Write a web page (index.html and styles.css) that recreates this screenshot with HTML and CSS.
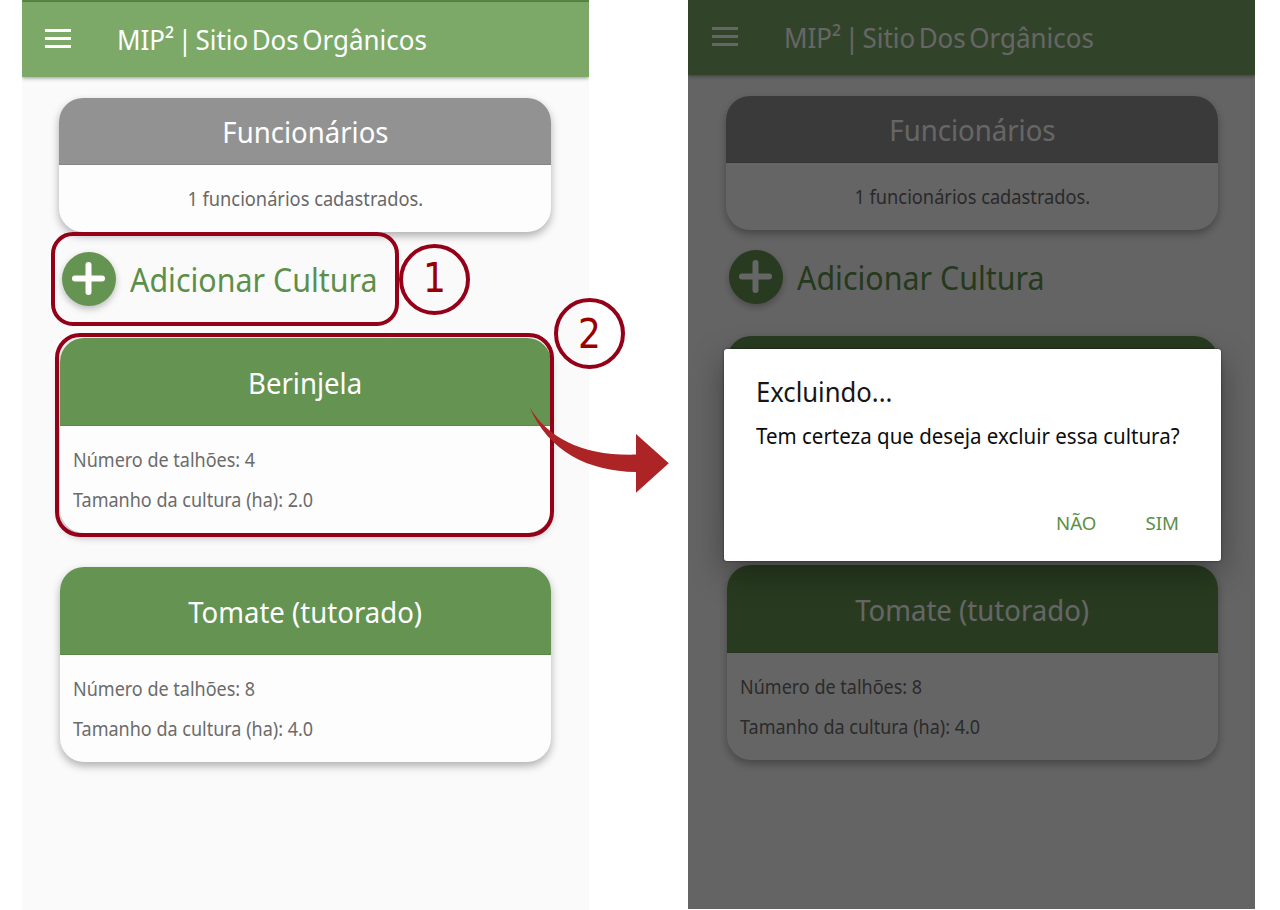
FILE: index.html
```
<!DOCTYPE html>
<html lang="pt-BR">
<head>
<meta charset="utf-8">
<title>MIP² | Sitio Dos Orgânicos</title>
<link rel="stylesheet" href="styles.css">
</head>
<body>
<main class="board">
  <section class="phone">
    <div class="screen">
      <div class="status"></div>
      <header class="bar">
        <svg class="menu" viewBox="0 0 26 19"><path d="M0 1.5h26M0 9.5h26M0 17.5h26"/></svg>
        <h1 class="bar-title">MIP² | Sitio Dos Orgânicos</h1>
      </header>
      <div class="content">
        <article class="card staff">
          <h2 class="card-head grey"><span class="fit">Funcionários</span></h2>
          <p class="staff-body"><span class="fit-staff">1 funcionários cadastrados.</span></p>
        </article>
        <div class="add">
          <span class="add-btn"><svg viewBox="0 0 54 54"><path d="M26.5 13v27M13 26.5h27"/></svg></span>
          <span class="add-label">Adicionar Cultura</span>
        </div>
        <article class="card crop">
          <h2 class="card-head"><span class="fit">Berinjela</span></h2>
          <div class="rows"><p class="row">Número de talhões: 4</p><p class="row">Tamanho da cultura (ha): 2.0</p></div>
        </article>
        <article class="card crop">
          <h2 class="card-head"><span class="fit">Tomate (tutorado)</span></h2>
          <div class="rows"><p class="row">Número de talhões: 8</p><p class="row">Tamanho da cultura (ha): 4.0</p></div>
        </article>
      </div>
    </div>
  </section>

  <section class="phone second">
    <div class="screen">
      <div class="status"></div>
      <header class="bar">
        <svg class="menu" viewBox="0 0 26 19"><path d="M0 1.5h26M0 9.5h26M0 17.5h26"/></svg>
        <h1 class="bar-title">MIP² | Sitio Dos Orgânicos</h1>
      </header>
      <div class="content">
        <article class="card staff">
          <h2 class="card-head grey"><span class="fit">Funcionários</span></h2>
          <p class="staff-body"><span class="fit-staff">1 funcionários cadastrados.</span></p>
        </article>
        <div class="add">
          <span class="add-btn"><svg viewBox="0 0 54 54"><path d="M26.5 13v27M13 26.5h27"/></svg></span>
          <span class="add-label">Adicionar Cultura</span>
        </div>
        <article class="card crop">
          <h2 class="card-head"></h2>
          <div class="rows"></div>
        </article>
        <article class="card crop">
          <h2 class="card-head"><span class="fit">Tomate (tutorado)</span></h2>
          <div class="rows"><p class="row">Número de talhões: 8</p><p class="row">Tamanho da cultura (ha): 4.0</p></div>
        </article>
      </div>
    </div>
    <div class="backdrop">
      <div class="dialog">
        <h2 class="dialog-title">Excluindo...</h2>
        <p class="dialog-text">Tem certeza que deseja excluir essa cultura?</p>
        <div class="actions"><span>NÃO</span><span>SIM</span></div>
      </div>
    </div>
  </section>

  <div class="mark box-one"></div>
  <div class="mark box-two"></div>
  <div class="mark badge badge-one">1</div>
  <div class="mark badge badge-two">2</div>
  <svg class="arrow" viewBox="529 406 140 88"><path d="M529.3 406.7C548 438 582 456 636 454.6V434L668.8 463.3L636 492.8V472C588 471 549 452 529.3 406.7Z"/></svg>
</main>
</body>
</html>
```
FILE: styles.css
```
* { box-sizing: border-box; }
body { margin: 0; background: #fff; font-family: "Noto Sans", sans-serif; }
h1, h2, p { margin: 0; font-weight: 400; white-space: nowrap; }

.board { position: relative; display: flex; gap: 99px; width: 1280px; height: 910px; padding-left: 22px; overflow: hidden; }
.phone { position: relative; width: 567px; height: 910px; background: #fafafa; overflow: hidden; }
.second { height: 909px; }
.second .screen { margin-top: -1.6px; }
.second .content { padding-left: 38px; }
.second .bar { padding-left: 24px; }

.status { height: 2px; background: #5f8a4c; }
.bar { display: flex; align-items: center; height: 75px; padding: 0 0 2px 23px; background: #7ca968; box-shadow: 0 1px 4px rgba(0,0,0,.42); }
.menu { width: 26px; height: 19px; fill: none; stroke: #fff; stroke-width: 2.8; }
.bar-title { margin-left: 45.5px; color: #fff; font-size: 28px; line-height: 40px; word-spacing: -3.5px; transform: scaleX(.927); transform-origin: left; }

.content { padding: 21px 0 0 37px; }
.card { border-radius: 24px; background: #fdfdfd; box-shadow: 0 4px 9px rgba(0,0,0,.3); overflow: hidden; }
.staff { width: 492px; height: 134px; }
.crop { width: 490.5px; height: 195px; margin: 0 0 33.5px 1px; }
.card-head { height: 88px; background: #659351; border-bottom: 1px solid #5b8749; color: #fff; font-size: 29px; line-height: 90px; text-align: center; }
.card-head.grey { height: 66.5px; background: #929292; border-color: #858585; line-height: 68px; }
.fit { display: inline-block; transform: scaleX(.95); }
.staff-body { color: #686868; font-size: 20px; line-height: 68px; text-align: center; }
.fit-staff { display: inline-block; transform: scaleX(.912); }
.rows { padding: 14px 0 0 13px; }
.row { color: #6b6b6b; font-size: 20px; line-height: 40px; transform: scaleX(.9); transform-origin: left; }

.add { display: flex; align-items: center; height: 106px; padding: 0 0 12px 3px; }
.add-btn { width: 54px; height: 54px; border-radius: 50%; background: #659351; box-shadow: 0 3px 7px rgba(0,0,0,.25); }
.add-btn svg { display: block; fill: none; stroke: #fff; stroke-width: 6; stroke-linecap: round; }
.add-label { margin-left: 13.5px; padding-top: 1px; color: #5c8f49; font-size: 32px; line-height: 44px; transform: scaleX(.949); transform-origin: left; white-space: nowrap; }

.backdrop { position: absolute; inset: 0; padding: 348.5px 0 0 35.5px; background: rgba(0,0,0,.6); }
.dialog { width: 497.5px; height: 212px; padding: 22px 42px 0 32.5px; border-radius: 3px; background: #fff; box-shadow: 0 0 2px rgba(0,0,0,.6), 0 12px 32px rgba(0,0,0,.35); }
.dialog-title { color: #161616; font-size: 27px; line-height: 42px; transform: scaleX(.95); transform-origin: left; }
.dialog-text { margin-top: 2px; color: #0c0c0c; font-size: 21.5px; line-height: 42px; transform: scaleX(.953); transform-origin: left; }
.actions { display: flex; justify-content: flex-end; gap: 49px; margin-top: 46px; color: #5b9046; font-size: 18.7px; line-height: 40px; }

.mark { position: absolute; border: 4px solid #940017; }
.box-one { left: 51px; top: 232px; width: 348px; height: 94px; border-radius: 22px; }
.box-two { left: 55px; top: 333px; width: 499px; height: 204px; border-radius: 25px; }
.badge { width: 71px; height: 71px; border-radius: 50%; color: #9b0000; font-family: "DejaVu Sans Condensed", "DejaVu Sans", sans-serif; font-size: 40px; line-height: 61px; text-align: center; }
.badge-one { left: 399px; top: 244px; }
.badge-two { left: 554px; top: 298px; line-height: 65px; }
.arrow { position: absolute; left: 529px; top: 406px; width: 140px; height: 88px; fill: #ad2426; }
```
